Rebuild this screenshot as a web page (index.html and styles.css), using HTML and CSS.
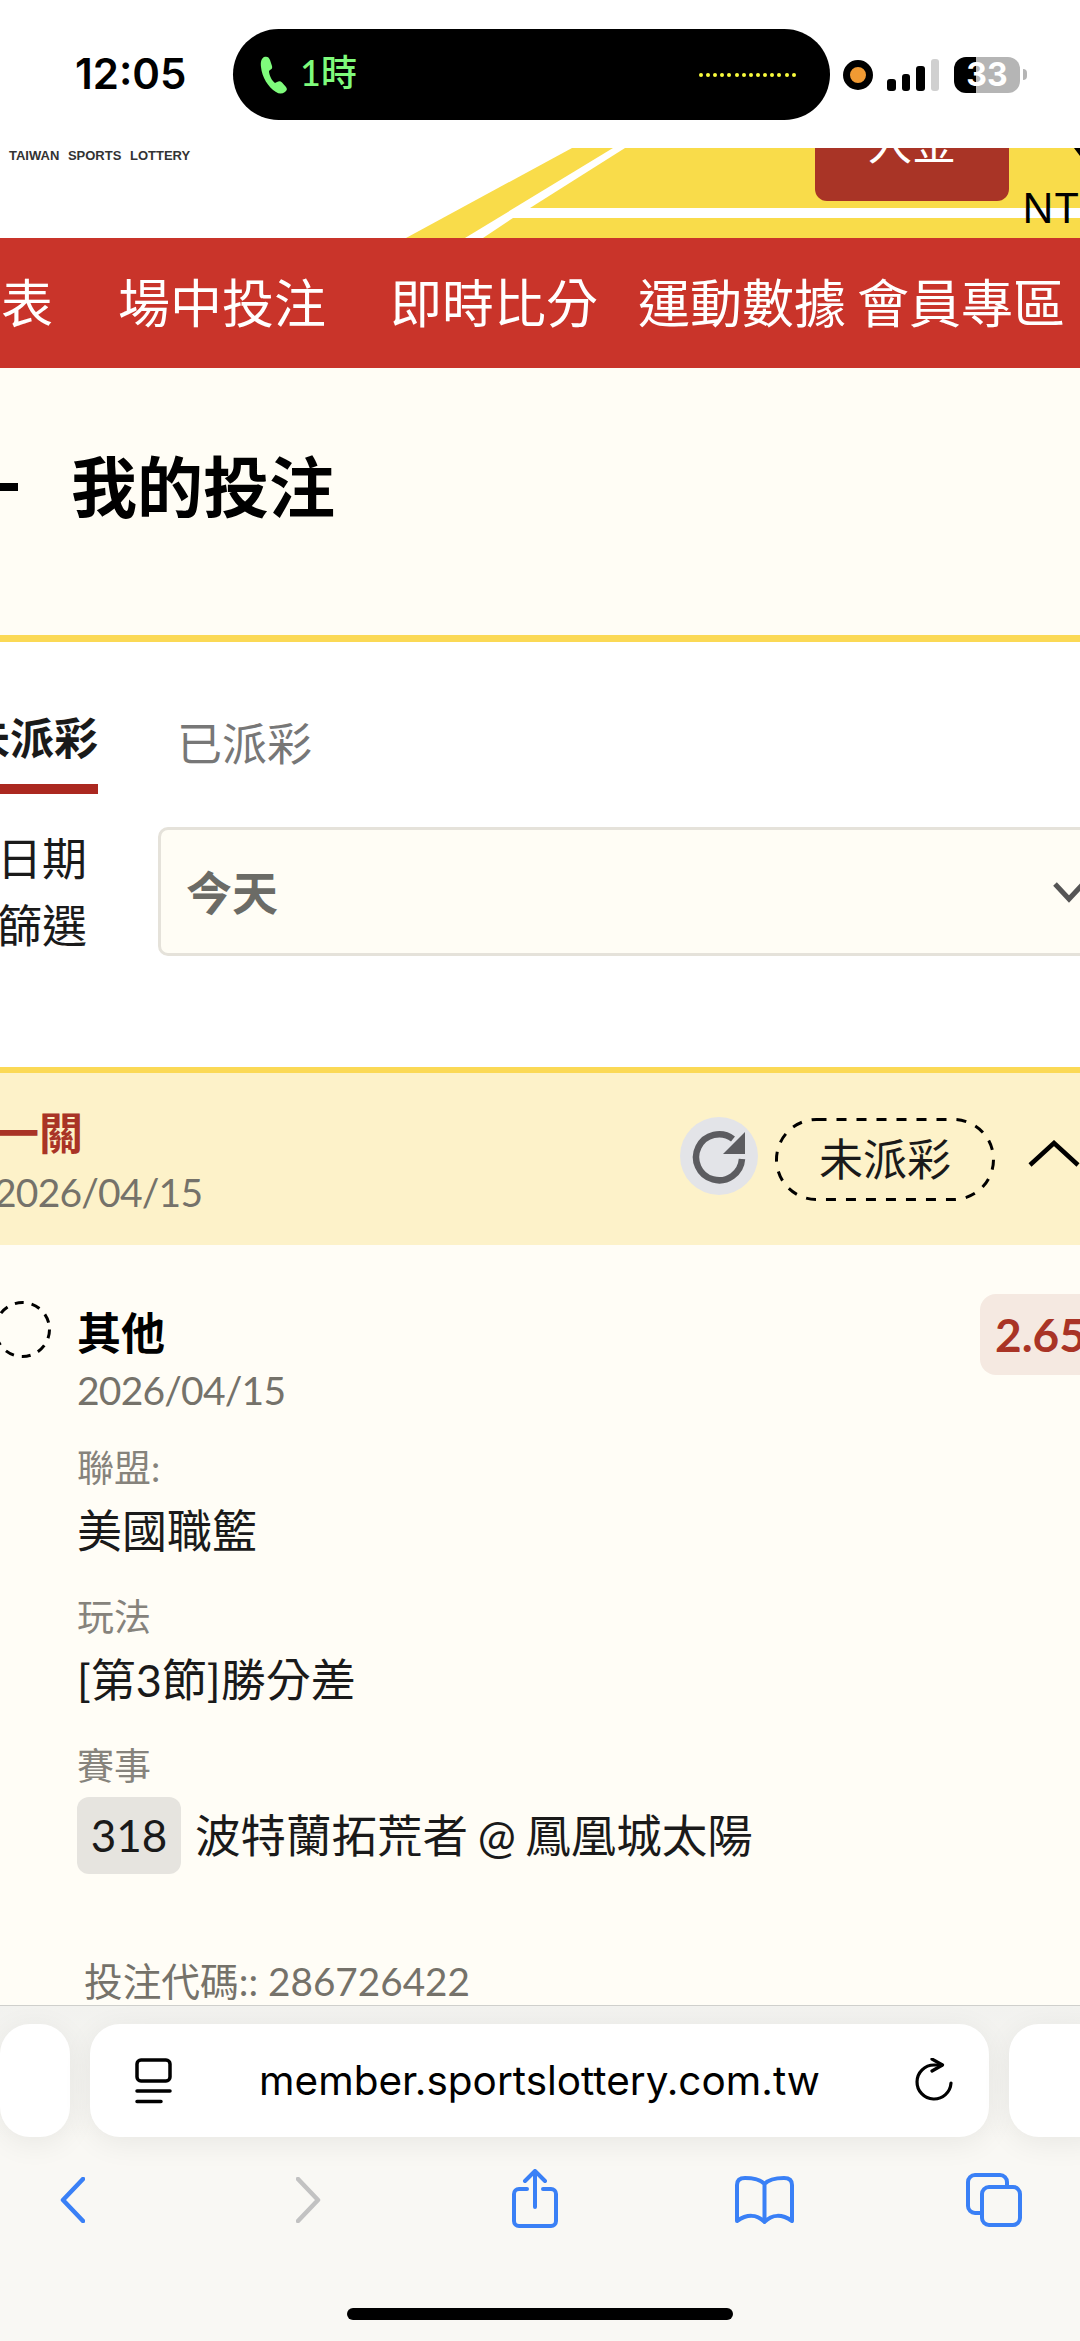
FILE: index.html
```html
<!DOCTYPE html>
<html lang="zh-Hant">
<head>
    <meta charset="UTF-8">
    <meta name="viewport" content="width=device-width, initial-scale=1.0">
    <title>我的投注</title>
    <link rel="stylesheet" href="styles.css">
</head>
<body>
    <div class="status-bar">
        <div class="status-time">12:05</div>
        <div class="island">
            <svg class="island-phone" width="28" height="38" viewBox="0 0 28 38"><path fill="#7ffb7c" d="M4 1C7 0 9 1 10 4L12 10C12.500 12 12 13 10 14L9 15C9 19 12 25 15 27L17 26C19 25 20.500 25 22 26.500L26 31C27.500 33 27 34.500 25 36C22 38 19 38 16 36C8 31 2 21 1 11C.5 6 1 3 4 1Z"/></svg>
            <span class="island-call">1時</span>
            <div class="island-dots">
                <i></i><i></i><i></i><i></i><i></i><i></i><i></i><i></i><i></i><i></i><i></i><i></i><i></i><i></i>
            </div>
        </div>
        <div class="status-icons">
            <div class="mic-dot"></div>
            <div class="signal">
                <i class="bar-1"></i><i class="bar-2"></i><i class="bar-3"></i><i class="bar-4"></i>
            </div>
            <div class="battery">33</div>
            <div class="battery-nub"></div>
        </div>
    </div>

    <div class="banner">
        <svg class="banner-art" width="1080" height="90" viewBox="0 0 1080 90">
            <polygon fill="#f9dc4a" points="406,90 572,0 613,0 465,90"/>
            <polygon fill="#f9dc4a" points="625,0 1080,0 1080,60 530,60"/>
            <polygon fill="#f9dc4a" points="513,70 1080,70 1080,90 483,90"/>
            <polygon fill="#000" points="1074,0 1080,0 1080,8"/>
        </svg>
        <div class="brand">TAIWAN SPORTS LOTTERY</div>
        <div class="deposit-btn">入金</div>
        <div class="balance">NTD</div>
    </div>

    <nav class="main-nav">
        <span class="nav-item nav-first">表</span>
        <span class="nav-item nav-live">場中投注</span>
        <span class="nav-item nav-score">即時比分</span>
        <span class="nav-item nav-data">運動數據</span>
        <span class="nav-item nav-member">會員專區</span>
    </nav>

    <div class="page-title">
        <div class="title-mark"></div>
        <h1>我的投注</h1>
    </div>

    <div class="tabs">
        <div class="tab active">未派彩</div>
        <div class="tab">已派彩</div>
    </div>

    <div class="filter">
        <div class="filter-label">日期<br>篩選</div>
        <div class="filter-select">
            <span>今天</span>
            <svg width="34" height="22" viewBox="0 0 34 22"><path d="M3 3L17 18L31 3" fill="none" stroke="#555" stroke-width="5"/></svg>
        </div>
    </div>

    <div class="bet-head">
        <div class="bet-head-left">
            <div class="bet-type">一關</div>
            <div class="bet-date">2026/04/15</div>
        </div>
        <div class="bet-head-right">
            <div class="refresh">
                <svg width="78" height="78" viewBox="0 0 78 78">
                    <path d="M53 22A23 23 0 1 0 62 42" fill="none" stroke="#5c5c60" stroke-width="6.500"/>
                    <polygon fill="#5c5c60" points="65,15 65,37 43,37"/>
                </svg>
            </div>
            <div class="status-pill">
                未派彩
                <svg class="dash-line" width="220" height="83" viewBox="0 0 220 83"><rect x="1.500" y="1.500" width="217" height="80" rx="40" fill="none" stroke="#000" stroke-width="3" stroke-dasharray="10 10"/></svg>
            </div>
            <svg class="collapse" width="52" height="28" viewBox="0 0 52 28"><path d="M2 25L26 3L50 25" fill="none" stroke="#000" stroke-width="4.500"/></svg>
        </div>
    </div>

    <div class="bet-body">
        <div class="leg">
            <svg class="leg-circle" width="57" height="57" viewBox="0 0 57 57"><circle cx="28.500" cy="28.500" r="27" fill="none" stroke="#000" stroke-width="3" stroke-dasharray="9 8"/></svg>
            <div class="leg-info">
                <div class="leg-name">其他</div>
                <div class="leg-date">2026/04/15</div>
                <div class="field field-first">
                    <div class="field-label">聯盟:</div>
                    <div class="field-value">美國職籃</div>
                </div>
                <div class="field">
                    <div class="field-label">玩法</div>
                    <div class="field-value">[第3節]勝分差</div>
                </div>
                <div class="field">
                    <div class="field-label">賽事</div>
                    <div class="match">
                        <span class="match-no">318</span>
                        <span class="field-value">波特蘭拓荒者 @ 鳳凰城太陽</span>
                    </div>
                </div>
            </div>
            <div class="odds">2.65</div>
        </div>
        <div class="bet-code">投注代碼:: 286726422</div>
    </div>

    <div class="safari">
        <div class="address-row">
            <div class="tab-peek"></div>
            <div class="address">
                <svg width="37" height="46" viewBox="0 0 37 46" fill="none" stroke="#000" stroke-width="3.500" stroke-linecap="round">
                    <rect x="2" y="2" width="33" height="21" rx="4"/>
                    <path d="M2 33H35M2 43.500H26"/>
                </svg>
                <span class="url">member.sportslottery.com.tw</span>
                <svg width="38" height="46" viewBox="0 0 38 46" fill="none" stroke="#000" stroke-width="3.200" stroke-linecap="round" stroke-linejoin="round">
                    <path d="M27 7H19A17 17 0 1 0 36 25"/>
                    <path d="M17 1L27.500 7L17 13"/>
                </svg>
            </div>
            <div class="tab-peek"></div>
        </div>
        <div class="toolbar">
            <svg class="tool-back" width="25" height="46" viewBox="0 0 25 46" fill="none" stroke="#3a80f6" stroke-width="4.500" stroke-linecap="round" stroke-linejoin="round"><path d="M23 2L3 23L23 44"/></svg>
            <svg class="tool-forward" width="25" height="46" viewBox="0 0 25 46" fill="none" stroke="#c2c2c2" stroke-width="4.500" stroke-linecap="round" stroke-linejoin="round"><path d="M2 2L22 23L2 44"/></svg>
            <svg class="tool-share" width="46" height="59" viewBox="0 0 46 59" fill="none" stroke="#3a80f6" stroke-width="4" stroke-linecap="round" stroke-linejoin="round"><path d="M15 20H7A5 5 0 0 0 2 25V52A5 5 0 0 0 7 57H39A5 5 0 0 0 44 52V25A5 5 0 0 0 39 20H31"/><path d="M23 38V2M13 12L23 2L33 12"/></svg>
            <svg class="tool-book" width="59" height="48" viewBox="0 0 59 48" fill="none" stroke="#3a80f6" stroke-width="4" stroke-linejoin="round"><path d="M29.500 8C25 3 18 2 10 2C5 2 2 4 2 9V45C12 38 22 38 29.500 46C37 38 47 38 57 45V9C57 4 54 2 49 2C41 2 34 3 29.500 8ZM29.500 8V46"/></svg>
            <svg class="tool-tabs" width="56" height="54" viewBox="0 0 56 54" fill="none" stroke="#3a80f6" stroke-width="4"><path d="M14 40H9A7 7 0 0 1 2 33V9A7 7 0 0 1 9 2H34A7 7 0 0 1 41 9V14"/><rect x="16" y="14" width="38" height="38" rx="7"/></svg>
        </div>
        <div class="home-bar"></div>
    </div>
</body>
</html>
```

FILE: styles.css
```css
* {
    box-sizing: border-box;
}
body {
    margin: 0;
    width: 1080px;
    height: 2341px;
    overflow: hidden;
    display: flex;
    flex-direction: column;
    background-color: #fff;
    color: #1a1a1a;
    font-family: Lato, "Noto Sans CJK TC", sans-serif;
}

/* phone status bar */
.status-bar {
    height: 148px;
    flex: none;
    display: flex;
    align-items: flex-start;
    padding: 29px 0 0 75px;
    background-color: #fff;
}
.status-time {
    width: 158px;
    height: 91px;
    line-height: 89px;
    font-family: Inter, sans-serif;
    font-size: 42px;
    font-weight: 600;
    color: #000;
}
.island {
    width: 597px;
    height: 91px;
    display: flex;
    align-items: center;
    padding-left: 27px;
    border-radius: 46px;
    background-color: #000;
}
.island-phone {
    flex: none;
}
.island-call {
    margin: -5px 0 0 12px;
    font-size: 36px;
    font-weight: 500;
    line-height: 46px;
    color: #7ffb7c;
}
.island-dots {
    margin-left: 342px;
    display: flex;
    gap: 3.150px;
}
.island-dots i {
    width: 4px;
    height: 4px;
    border-radius: 50%;
    background-color: #f8fb3c;
}
.status-icons {
    height: 91px;
    margin-left: 13px;
    display: flex;
    align-items: center;
}
.mic-dot {
    width: 30px;
    height: 30px;
    border: 7px solid #000;
    border-radius: 50%;
    background-color: #f09a33;
}
.signal {
    margin-left: 14px;
    display: flex;
    align-items: flex-end;
    gap: 6px;
}
.signal i {
    width: 8.500px;
    border-radius: 3px;
    background-color: #000;
}
.bar-1 {
    height: 12px;
}
.bar-2 {
    height: 17px;
}
.bar-3 {
    height: 25px;
}
.bar-4 {
    height: 32px;
    background-color: #d0d0d0 !important;
}
.battery {
    width: 66px;
    height: 36px;
    margin-left: 15px;
    border-radius: 12px;
    background: linear-gradient(to right, #000 22px, #b5b5b5 22px);
    color: #fff;
    font-family: Inter, sans-serif;
    font-size: 32px;
    font-weight: 700;
    line-height: 36px;
    text-align: center;
}
.battery-nub {
    width: 4px;
    height: 11px;
    margin-left: 3px;
    border-radius: 0 5px 5px 0;
    background-color: #b5b5b5;
}

/* header art */
.banner {
    position: relative;
    height: 90px;
    flex: none;
    overflow: hidden;
    background-color: #fff;
}
.banner-art {
    position: absolute;
    left: 0;
    top: 0;
}
.brand {
    position: relative;
    padding-left: 9px;
    font-family: "Liberation Sans", sans-serif;
    font-size: 13px;
    font-weight: 700;
    line-height: 15px;
    word-spacing: 5px;
    color: #333;
}
.deposit-btn {
    position: absolute;
    left: 815px;
    top: -44px;
    width: 194px;
    height: 97px;
    padding-top: 17px;
    border-radius: 12px;
    background-color: #a93426;
    color: #fff;
    font-size: 44px;
    line-height: 44px;
    text-align: center;
}
.balance {
    position: absolute;
    left: 1022px;
    top: 34px;
    font-family: "Noto Sans", sans-serif;
    font-size: 42px;
    line-height: 50px;
    letter-spacing: 1px;
    color: #000;
}

/* red menu */
.main-nav {
    height: 130px;
    flex: none;
    display: flex;
    align-items: center;
    background-color: #c9342a;
    color: #fff;
    font-size: 52px;
    line-height: 60px;
    white-space: nowrap;
}
.nav-item {
    flex: none;
}
.nav-first {
    margin-left: 1px;
}
.nav-live {
    margin-left: 65px;
}
.nav-score {
    margin-left: 64px;
}
.nav-data {
    margin-left: 40px;
}
.nav-member {
    margin-left: 11px;
}

.page-title {
    height: 274px;
    flex: none;
    display: flex;
    align-items: center;
    padding-bottom: 29px;
    border-bottom: 7px solid #fbd955;
    background-color: #fffdf5;
}
.title-mark {
    width: 18px;
    height: 8px;
    background-color: #000;
}
.page-title h1 {
    margin: 0 0 0 53px;
    font-size: 66px;
    font-weight: 700;
    line-height: 80px;
    color: #000;
}

.tabs {
    height: 152px;
    flex: none;
    display: flex;
    align-items: flex-start;
    margin-left: -34px;
    font-size: 44px;
    line-height: 44px;
}
.tab {
    margin-right: 79px;
    padding-top: 80px;
    font-size: 45px;
    color: #777;
}
.tab.active {
    height: 152px;
    padding-top: 74px;
    border-bottom: 10px solid #ab2820;
    font-size: 44px;
    font-weight: 700;
    color: #1a1a1a;
}

.filter {
    flex: none;
    display: flex;
    align-items: flex-start;
    margin: 32px -20px 107px -3px;
}
.filter-label {
    width: 161px;
    font-size: 45px;
    line-height: 67px;
}
.filter-select {
    flex: 1;
    height: 129px;
    margin-top: 1px;
    display: flex;
    align-items: center;
    justify-content: space-between;
    padding: 0 11px 4px 25px;
    border: 3px solid #e5e2da;
    border-radius: 10px;
    background-color: #fffdf5;
    font-size: 46px;
    font-weight: 700;
    color: #6b6b66;
}
.filter-select svg {
    margin-top: 4px;
}

.bet-head {
    height: 178px;
    flex: none;
    display: flex;
    justify-content: space-between;
    border-top: 6px solid #fbd955;
    background-color: #fdf2c9;
}
.bet-head-left {
    margin-left: -6px;
    padding-top: 35px;
}
.bet-type {
    margin-left: 1px;
    font-size: 44px;
    font-weight: 700;
    line-height: 50px;
    color: #a93426;
}
.bet-date,
.leg-date {
    margin-top: 7px;
    font-size: 39px;
    line-height: 50px;
    letter-spacing: -0.8px;
    color: #75726a;
}
.bet-date {
    margin-top: 9px;
}
.bet-head-right {
    display: flex;
    align-items: center;
}
.refresh {
    width: 78px;
    height: 78px;
    margin-top: -6px;
    border-radius: 50%;
    background-color: #e3e4e8;
}
.refresh svg {
    display: block;
}
.status-pill {
    position: relative;
    width: 220px;
    height: 83px;
    margin-left: 17px;
    font-size: 44px;
    line-height: 83px;
    text-align: center;
}
.dash-line {
    position: absolute;
    left: 0;
    top: 0;
}
.collapse {
    margin: -10px 0 0 33px;
}

.bet-body {
    flex: 1;
    min-height: 0;
    overflow: hidden;
    padding-top: 49px;
    background-color: #fffdf6;
}
.leg {
    display: flex;
    align-items: flex-start;
}
.leg-circle {
    flex: none;
    margin: 7px 0 0 -6px;
}
.leg-info {
    flex: 1;
    margin: 14px 0 0 26px;
}
.leg-name {
    font-size: 44px;
    font-weight: 700;
    line-height: 50px;
    color: #000;
}
.field {
    margin-top: 38px;
}
.field-first {
    margin-top: 30px;
}
.field-label {
    font-size: 37px;
    line-height: 46px;
    color: #86837c;
}
.field-value {
    margin-top: 15px;
    font-size: 45px;
    line-height: 50px;
}
.match {
    display: flex;
    align-items: center;
    margin-top: 8px;
}
.match-no {
    width: 104px;
    height: 77px;
    border-radius: 12px;
    background-color: #e6e4df;
    font-size: 44px;
    line-height: 77px;
    text-align: center;
}
.match .field-value {
    margin: 0 0 0 14px;
    font-size: 45.500px;
    white-space: nowrap;
    word-spacing: -2px;
}
.odds {
    width: 130px;
    height: 81px;
    flex: none;
    margin-right: -30px;
    padding-left: 15px;
    border-radius: 16px;
    background-color: #f5e9e1;
    color: #a93426;
    font-size: 46px;
    font-weight: 700;
    line-height: 81px;
}
.bet-code {
    margin: 84px 0 0 84px;
    font-size: 38.700px;
    line-height: 46px;
    color: #75726a;
}

/* safari bottom bar */
.safari {
    height: 336px;
    flex: none;
    padding-top: 18px;
    border-top: 1px solid #cfcfcc;
    background: linear-gradient(#f2f2ef, #f9f8f4 40%);
}
.address-row {
    display: grid;
    grid-template-columns: 70px 899px 100px;
    column-gap: 20px;
}
.tab-peek,
.address {
    height: 113px;
    border-radius: 30px;
    background-color: #fff;
    box-shadow: 0 6px 30px rgba(0, 0, 0, 0.07);
}
.address {
    display: flex;
    align-items: center;
    justify-content: space-between;
    padding: 0 36px 0 45px;
}
.url {
    margin-right: 8px;
    font-family: Inter, sans-serif;
    font-size: 40.500px;
    color: #000;
}
.toolbar {
    height: 62px;
    margin-top: 32px;
    display: flex;
    align-items: center;
    padding-left: 60px;
}
.tool-forward {
    margin-left: 211px;
}
.tool-share {
    margin-left: 191px;
    margin-top: -3px;
}
.tool-book {
    margin-left: 177px;
}
.tool-tabs {
    margin-left: 172px;
}
.home-bar {
    width: 386px;
    height: 12px;
    margin: 77px auto 0;
    border-radius: 6px;
    background-color: #000;
}
```
